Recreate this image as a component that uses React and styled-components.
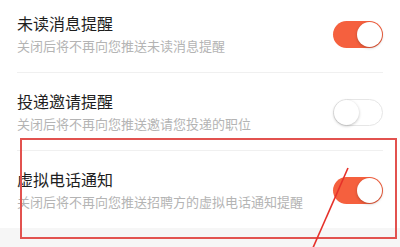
import React from 'react';
import styled, { createGlobalStyle } from 'styled-components';

const GlobalStyle = createGlobalStyle`
  html, body {
    margin: 0;
    padding: 0;
    background: #f6f6f6;
    font-family: "Noto Sans CJK SC", "Noto Sans", sans-serif;
  }
`;

const Page = styled.div`
  position: relative;
  width: 400px;
  height: 247px;
  overflow: hidden;
  background: #f6f6f6;
`;

const List = styled.div`
  margin-top: -5px;
  background: #ffffff;
`;

const Row = styled.div`
  padding: 0 17px;
`;

const RowInner = styled.div`
  display: flex;
  align-items: center;
  justify-content: space-between;
  padding: 18px 0 17px;
  border-bottom: ${props => (props.last ? 'none' : '1px solid #f0f0f0')};
`;

const TextBlock = styled.div`
  display: flex;
  flex-direction: column;
  gap: 4px;
`;

const Title = styled.div`
  font-size: 16px;
  line-height: 20px;
  color: #1e1e1e;
`;

const Desc = styled.div`
  font-size: 13px;
  line-height: 18px;
  color: #b4b4b4;
`;

const Switch = styled.div`
  position: relative;
  width: 50px;
  height: 27px;
  border-radius: 14px;
  box-sizing: border-box;
  background: ${props => (props.on ? '#f5603e' : '#ffffff')};
  border: ${props => (props.on ? 'none' : '1px solid #e6e6e6')};
  flex-shrink: 0;
`;

const Knob = styled.div`
  position: absolute;
  top: ${props => (props.on ? '1px' : '0')};
  left: ${props => (props.on ? '24px' : '0')};
  width: 25px;
  height: 25px;
  border-radius: 50%;
  background: #ffffff;
  box-shadow: 0 1px 3px rgba(0, 0, 0, 0.25);
`;

const Highlight = styled.div`
  position: absolute;
  left: 20px;
  top: 138px;
  width: 377px;
  height: 101px;
  box-sizing: border-box;
  border: 2px solid #e2524f;
  pointer-events: none;
`;

const Arrow = styled.svg`
  position: absolute;
  left: 0;
  top: 0;
  pointer-events: none;
`;

const items = [
  { title: '未读消息提醒', desc: '关闭后将不再向您推送未读消息提醒', on: true },
  { title: '投递邀请提醒', desc: '关闭后将不再向您推送邀请您投递的职位', on: false },
  { title: '虚拟电话通知', desc: '关闭后将不再向您推送招聘方的虚拟电话通知提醒', on: true },
];

const App = () => (
  <Page>
    <GlobalStyle />
    <List>
      {items.map((item, i) => (
        <Row key={item.title}>
          <RowInner last={i === items.length - 1}>
            <TextBlock>
              <Title>{item.title}</Title>
              <Desc>{item.desc}</Desc>
            </TextBlock>
            <Switch on={item.on}>
              <Knob on={item.on} />
            </Switch>
          </RowInner>
        </Row>
      ))}
    </List>
    <Highlight />
    <Arrow width="400" height="247" viewBox="0 0 400 247">
      <line x1="348" y1="168" x2="312" y2="250" stroke="#e6312a" strokeWidth="1.6" />
    </Arrow>
  </Page>
);

export default App;
